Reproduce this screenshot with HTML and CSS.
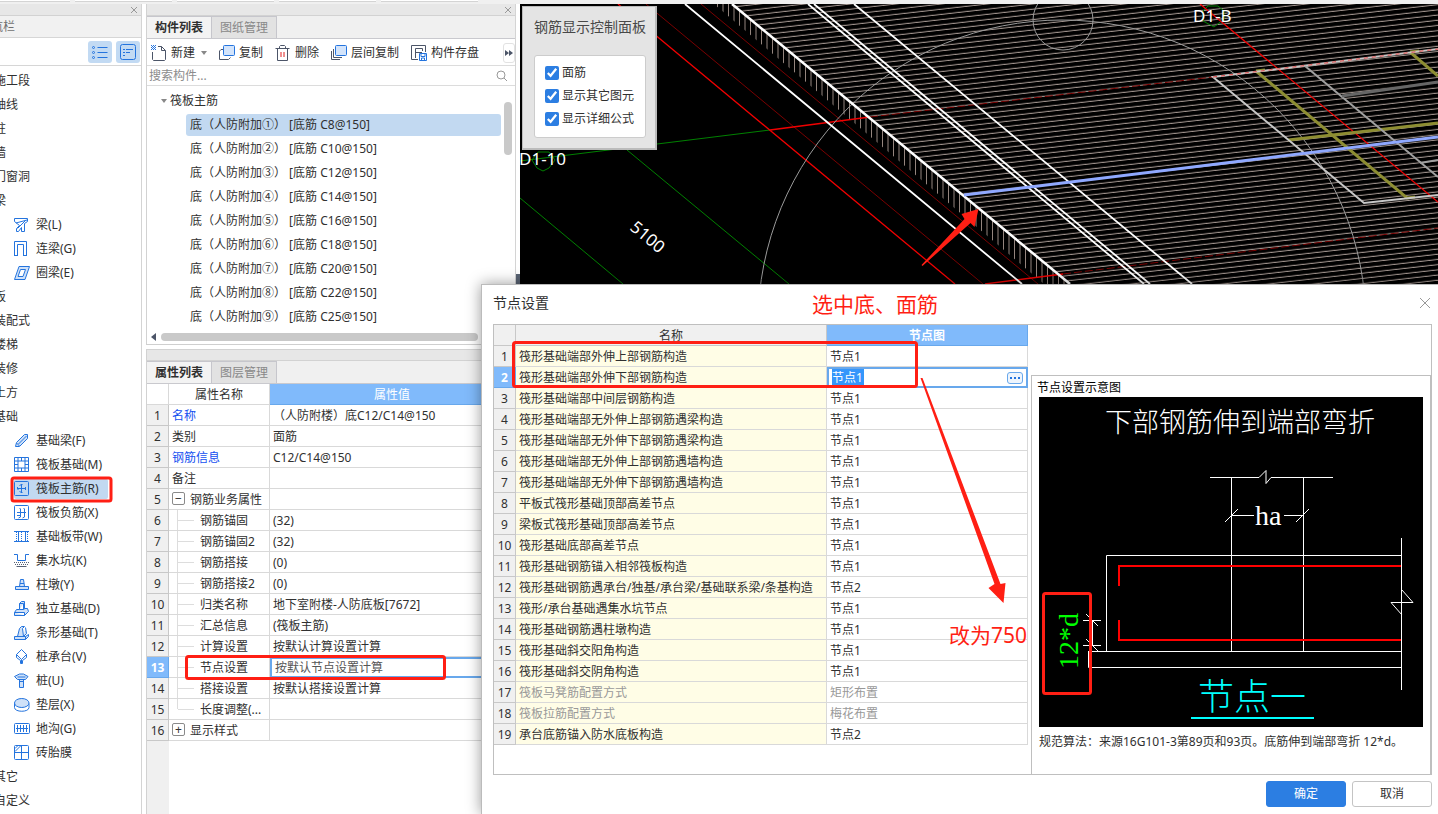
FILE: index.html
```html
<!DOCTYPE html>
<html lang="zh-CN">
<head>
<meta charset="utf-8">
<title>节点设置</title>
<link rel="stylesheet" href="styles.css">
</head>
<body>
<div class="ribbon"><span></span><span></span><span></span><span></span><span></span></div>
<div class="workspace">
  <nav class="nav">
    <div class="titlebar"><button class="close" aria-label="关闭"><svg width="8" height="8" viewBox="0 0 8 8"><path d="M1 1l6 6M7 1l-6 6"/></svg></button></div>
    <div class="nav-head"><span>导航栏</span></div>
    <div class="nav-tools">
      <button aria-label="列表"><svg width="16" height="16" viewBox="0 0 16 16"><path d="M5.500 3.500h10M5.500 8.500h10M5.500 13.500h10"/><circle cx="1.500" cy="3.500" r="1"/><circle cx="1.500" cy="8.500" r="1"/><circle cx="1.500" cy="13.500" r="1"/></svg></button>
      <button aria-label="详情"><svg width="16" height="16" viewBox="0 0 16 16"><rect x=".5" y=".5" width="15" height="15" rx="2"/><path d="M3 5.500h2M6 5.500h7M3 8.500h2M6 8.500h4M3 11.500h2"/></svg></button>
    </div>
    <ul class="cats">
      <li>施工段</li><li>轴线</li><li>柱</li><li>墙</li><li>门窗洞</li><li>梁</li>
      <li class="sub"><svg viewBox="0 0 16 16"><path d="M.5 1.500h13v3l-3 2v8h-3v-4l-3 4h-2v-3l3-3-5-4zM2 6L13 3M3.500 11.500l8-8"/></svg>梁(L)</li>
      <li class="sub"><svg viewBox="0 0 16 16"><path d="M.5 15V.5h12V15M3.500 15V3.500h6V15M0 14.500h3.500M9.500 14.500H13"/></svg>连梁(G)</li>
      <li class="sub"><svg viewBox="0 0 16 16"><path class="tint" fill-rule="evenodd" d="M5 1.500h10.500L11 14.500H.5zM6.500 4.500h5L9 11.500H4z"/></svg>圈梁(E)</li>
      <li>板</li><li>装配式</li><li>楼梯</li><li>装修</li><li>土方</li><li>基础</li>
      <li class="sub"><svg viewBox="0 0 16 16"><path class="tint" d="M1.500 13.500l1-4 8-8h3v4l-8 8zM2.500 10l3 3M4.500 11l8-8"/></svg>基础梁(F)</li>
      <li class="sub"><svg viewBox="0 0 16 16"><path d="M.5 .5h14v14H.5zM.5 4h14M.5 11h14M4 .5v14M11 .5v14M7.500 .5V4M7.500 11v4M.5 7.500H4M11 7.500h4"/></svg>筏板基础(M)</li>
      <li class="sub active"><svg viewBox="0 0 16 16"><rect x=".5" y=".5" width="14" height="14" rx="1"/><path d="M7.500 3v9M3.500 7.500h8M5.500 5L7.500 3l1 1M5.500 10l2 2 1-1M3.500 6v2l1 1M11.500 6v3"/></svg>筏板主筋(R)</li>
      <li class="sub"><svg viewBox="0 0 16 16"><rect x=".5" y=".5" width="14" height="14" rx="1"/><path d="M5.500 3l1 1v8l-2 1M9.500 3l1 1v8l-2 1M3 7.500h9M3 10.500h3"/></svg>筏板负筋(X)</li>
      <li class="sub"><svg viewBox="0 0 16 16"><path d="M0 2.500h15M0 12.500h15M4.500 2.500v10M11.500 2.500v10"/><path stroke-dasharray="1 1" d="M2.500 3v9M7.500 3v9M13.500 3v9"/></svg>基础板带(W)</li>
      <li class="sub"><svg viewBox="0 0 16 16"><path d="M0 1.500h3.500v6h8v-6H15"/><path class="slate" stroke-dasharray="1 1" d="M0 9.500h15M1 11.500h13"/><path class="slate" d="M2.500 13.500h10"/></svg>集水坑(K)</li>
      <li class="sub"><svg viewBox="0 0 16 16"><path class="tint" d="M5.500 9.500l1-7h3l1 7M1.500 12.500v-3h13v3zM6 6.500h4"/></svg>柱墩(Y)</li>
      <li class="sub"><svg viewBox="0 0 16 16"><path class="tint" d="M.5 14.500h10v-3H.5zM.5 11.500l2-3h3v-6l2-2h3v7h3l1 3-4 4M5.500 8.500h4v-6M9.500 2.500h-4M9.500 8.500l1.500-1"/></svg>独立基础(D)</li>
      <li class="sub"><svg viewBox="0 0 16 16"><path class="tint" d="M.5 14.500h11v-3H.5zM2.500 11.500h7l-1-8 2-2h-3l-2 2-2 8M9.500 11.500l3-3-1-6M11.500 11.500l3-2v2l-3 3"/></svg>条形基础(T)</li>
      <li class="sub"><svg viewBox="0 0 16 16"><path d="M7.500 .5l5 5-5 5-5-5zM2.500 5.500v3l4 3v3h2v-3l4-3v-3M7.500 10.500V15"/></svg>桩承台(V)</li>
      <li class="sub"><svg viewBox="0 0 16 16"><path class="tint" d="M.5 3.500l5-2.500h4l4.500 2.500-2.500 3h-8zM5.500 6.500v8h4v-8M3.500 4h8M5.500 8.500h4"/></svg>桩(U)</li>
      <li class="sub"><svg viewBox="0 0 16 16"><path d="M.5 6.500v4c0 5 14.500 5 14.500 0v-4"/><ellipse class="tint" cx="7.750" cy="6" rx="7.250" ry="4.500"/></svg>垫层(X)</li>
      <li class="sub"><svg viewBox="0 0 16 16"><rect x=".5" y="2.500" width="15" height="10" rx="1"/><path d="M2 7.500h12M3.500 4v7M6.500 4v7M9.500 4v7M12.500 4v7"/></svg>地沟(G)</li>
      <li class="sub"><svg viewBox="0 0 16 16"><rect x=".5" y=".5" width="14" height="14" rx="1"/><path d="M7.500 .5v14M.5 7.500h14M1 6.500l6-6M1 3.500l3-3"/></svg>砖胎膜</li>
      <li>其它</li><li>自定义</li>
    </ul>
  </nav>

  <div class="middle">
    <section class="panel">
      <div class="titlebar"><button class="close" aria-label="关闭"><svg width="8" height="8" viewBox="0 0 8 8"><path d="M1 1l6 6M7 1l-6 6"/></svg></button></div>
      <div class="tabs"><button class="tab on">构件列表</button><button class="tab">图纸管理</button></div>
      <div class="toolbar">
        <button><svg viewBox="0 0 16 16"><path d="M1.500 7v7.500l1 1h11l1-1V5.500l-4-4H7M10.500 1.500v4h4"/><path class="blue" stroke-dasharray="1 1" d="M0 .5h5M1 1.500h4M0 2.500h5M1 3.500h4M0 4.500h5"/></svg>新建<i class="caret"></i></button>
        <button><svg viewBox="0 0 16 16"><path d="M4.500 4.500H2L.5 6v8.500h9l2-2"/><rect class="sheet" x="4.500" y=".5" width="11" height="10" rx="1"/></svg>复制</button>
        <button><svg viewBox="0 0 16 16"><path d="M2.500 3.500v12h10v-12M.5 3.500h14M4.500 3.500v-2l1-1h4l1 1v2"/><path class="red" d="M6 7v5M9 7v5"/></svg>删除</button>
        <button><svg viewBox="0 0 16 16"><path d="M.5 6v8.500H9M2.500 4v8.500H11"/><rect class="sheet" x="4.500" y=".5" width="11" height="10" rx="1"/></svg>层间复制</button>
        <button><svg viewBox="0 0 16 16"><path d="M7 14.500H.5V.5h14V7M4.500 13V3.500h7V6M4.500 7.500H11"/><path class="blue" d="M8.500 8.500h7v7h-7zM10 8.500v3h4v-3M10.500 15v-2h3v2"/></svg>构件存盘</button>
        <button class="more" aria-label="更多"><svg width="8" height="6" viewBox="0 0 8 6"><path d="M0 0l4 3-4 3zM4 0l4 3-4 3z"/></svg></button>
      </div>
      <div class="search"><input type="search" placeholder="搜索构件..." aria-label="搜索构件"><svg width="12" height="12" viewBox="0 0 12 12"><circle cx="5" cy="5" r="4"/><path d="M8 8l3 3"/></svg></div>
      <div class="tree">
        <ul>
          <li class="root"><i class="caret"></i>筏板主筋</li>
          <li class="sel">底（人防附加①） [底筋 C8@150]</li>
          <li>底（人防附加②） [底筋 C10@150]</li>
          <li>底（人防附加③） [底筋 C12@150]</li>
          <li>底（人防附加④） [底筋 C14@150]</li>
          <li>底（人防附加⑤） [底筋 C16@150]</li>
          <li>底（人防附加⑥） [底筋 C18@150]</li>
          <li>底（人防附加⑦） [底筋 C20@150]</li>
          <li>底（人防附加⑧） [底筋 C22@150]</li>
          <li>底（人防附加⑨） [底筋 C25@150]</li>
        </ul>
        <div class="vbar"></div>
      </div>
      <div class="hbar"><i></i><span></span></div>
    </section>

    <section class="panel props">
      <div class="titlebar"></div>
      <div class="tabs"><button class="tab on">属性列表</button><button class="tab">图层管理</button></div>
      <table class="grid">
        <colgroup><col class="c-num"><col class="c-key"><col></colgroup>
        <thead><tr><td></td><th>属性名称</th><th class="hot">属性值</th></tr></thead>
        <tbody>
          <tr><th>1</th><td class="link">名称</td><td>（人防附楼）底C12/C14@150</td></tr>
          <tr><th>2</th><td>类别</td><td>面筋</td></tr>
          <tr><th>3</th><td class="link">钢筋信息</td><td>C12/C14@150</td></tr>
          <tr><th>4</th><td>备注</td><td></td></tr>
          <tr><th>5</th><td><button class="fold" aria-label="折叠">−</button>钢筋业务属性</td><td></td></tr>
          <tr><th>6</th><td class="leaf">钢筋锚固</td><td>(32)</td></tr>
          <tr><th>7</th><td class="leaf">钢筋锚固2</td><td>(32)</td></tr>
          <tr><th>8</th><td class="leaf">钢筋搭接</td><td>(0)</td></tr>
          <tr><th>9</th><td class="leaf">钢筋搭接2</td><td>(0)</td></tr>
          <tr><th>10</th><td class="leaf">归类名称</td><td>地下室附楼-人防底板[7672]</td></tr>
          <tr><th>11</th><td class="leaf">汇总信息</td><td>(筏板主筋)</td></tr>
          <tr><th>12</th><td class="leaf">计算设置</td><td>按默认计算设置计算</td></tr>
          <tr class="cur"><th>13</th><td class="leaf">节点设置</td><td>按默认节点设置计算</td></tr>
          <tr><th>14</th><td class="leaf">搭接设置</td><td>按默认搭接设置计算</td></tr>
          <tr><th>15</th><td class="leaf last">长度调整(...</td><td></td></tr>
          <tr><th>16</th><td><button class="fold" aria-label="展开">+</button>显示样式</td><td></td></tr>
        </tbody>
      </table>
    </section>
  </div>

  <main class="view">
    <svg class="scene" viewBox="520 4 918 280" preserveAspectRatio="xMinYMin slice">
      <defs>
        <pattern id="bars" width="60" height="5.200" patternUnits="userSpaceOnUse" patternTransform="skewY(-6.500)"><path d="M0 2h60" stroke="#a0938d" stroke-width="1.100"/></pattern>
        <pattern id="ticks" width="11" height="800" patternUnits="userSpaceOnUse"><path d="M2.500 0v800M8 0v800" stroke="#94857e" stroke-width="1"/></pattern>
      </defs>
      <path d="M520 4h918v280H520z"/>
      <path fill="url(#bars)" d="M732 4h706v280h-368z"/>
      <path fill="url(#ticks)" d="M714 4h18l338 280h-26z"/>
      <g fill="none">
        <g stroke="#008000"><path d="M520 161l250-31M627 150l162 134M520 198l103 86M532 160l6-8h11l6 8-6 8-6 3-6-3zM1203 11l5-5h10l6 5v8l-10 8-11-6z"/></g>
        <g stroke="#7a0000"><path d="M701 4l337 280M646 4l337 280"/><path stroke-dasharray="8 3" d="M870 117l343-40M1063 274l375-46"/></g>
        <g stroke="#f00000"><path stroke-width="1.300" d="M618 4l337 280M770 130l100-13M985 284l78-10M1200 4l238 198"/></g>
        <g stroke="#9a9a9a"><circle cx="1062" cy="324" r="304"/><circle cx="1063" cy="20" r="30"/></g>
        <g stroke="#fff" stroke-width="1.800"><path d="M685 4l337 280M808 4l336 280M814 4l336 280M854 4l338 280"/><path stroke-width="2.500" d="M732 4l338 280"/></g>
        <g stroke="#8d8d32" stroke-width="3"><path d="M1256 71l151 127 8-1M1288 140l150-17M1410 52l28 24M1256 71l9-1M1410 52l9-1"/></g>
        <g stroke="#c8c8c8" stroke-width="2"><path d="M1438 49l-225 28 151 126 74-8"/><path stroke="#a0a0a0" d="M1305 66l133 111M1420 163l18-3"/><path stroke="#666" stroke-width="3" d="M1342 96l96-14"/></g>
        <path stroke="#e04040" stroke-dasharray="4 4" d="M1213 77l225-28"/>
        <path stroke="#8fa8ff" stroke-width="3" d="M964 195l474-58"/>
      </g>
      <g class="cad"><text x="519" y="165">D1-10</text><text x="1193" y="22">D1-B</text><text transform="translate(629 229) rotate(40)">5100</text></g>
    </svg>
    <aside class="ctl">
      <h2>钢筋显示控制面板</h2>
      <div class="ctl-box">
        <label><input type="checkbox" checked>面筋</label>
        <label><input type="checkbox" checked>显示其它图元</label>
        <label><input type="checkbox" checked>显示详细公式</label>
      </div>
    </aside>
  </main>
</div>

<div class="dialog" role="dialog" aria-label="节点设置">
  <header><h1>节点设置</h1><button class="close" aria-label="关闭"><svg width="12" height="12" viewBox="0 0 12 12"><path d="M1 1l10 10M11 1L1 11"/></svg></button></header>
  <div class="dialog-body">
    <table class="grid nodes">
      <colgroup><col class="c-num"><col><col class="c-node"></colgroup>
      <thead><tr><th></th><th>名称</th><th class="hot strong">节点图</th></tr></thead>
      <tbody>
        <tr><th>1</th><td>筏形基础端部外伸上部钢筋构造</td><td>节点1</td></tr>
        <tr class="cur"><th>2</th><td>筏形基础端部外伸下部钢筋构造</td><td><div class="edit"><input value="节点1" aria-label="节点图"><button aria-label="选择节点"><svg width="10" height="2" viewBox="0 0 10 2"><path d="M0 0h2v2H0zM4 0h2v2H4zM8 0h2v2H8z"/></svg></button></div></td></tr>
        <tr><th>3</th><td>筏形基础端部中间层钢筋构造</td><td>节点1</td></tr>
        <tr><th>4</th><td>筏形基础端部无外伸上部钢筋遇梁构造</td><td>节点1</td></tr>
        <tr><th>5</th><td>筏形基础端部无外伸下部钢筋遇梁构造</td><td>节点1</td></tr>
        <tr><th>6</th><td>筏形基础端部无外伸上部钢筋遇墙构造</td><td>节点1</td></tr>
        <tr><th>7</th><td>筏形基础端部无外伸下部钢筋遇墙构造</td><td>节点1</td></tr>
        <tr><th>8</th><td>平板式筏形基础顶部高差节点</td><td>节点1</td></tr>
        <tr><th>9</th><td>梁板式筏形基础顶部高差节点</td><td>节点1</td></tr>
        <tr><th>10</th><td>筏形基础底部高差节点</td><td>节点1</td></tr>
        <tr><th>11</th><td>筏形基础钢筋锚入相邻筏板构造</td><td>节点1</td></tr>
        <tr><th>12</th><td>筏形基础钢筋遇承台/独基/承台梁/基础联系梁/条基构造</td><td>节点2</td></tr>
        <tr><th>13</th><td>筏形/承台基础遇集水坑节点</td><td>节点1</td></tr>
        <tr><th>14</th><td>筏形基础钢筋遇柱墩构造</td><td>节点1</td></tr>
        <tr><th>15</th><td>筏形基础斜交阳角构造</td><td>节点1</td></tr>
        <tr><th>16</th><td>筏形基础斜交阴角构造</td><td>节点1</td></tr>
        <tr class="off"><th>17</th><td>筏板马凳筋配置方式</td><td>矩形布置</td></tr>
        <tr class="off"><th>18</th><td>筏板拉筋配置方式</td><td>梅花布置</td></tr>
        <tr><th>19</th><td>承台底筋锚入防水底板构造</td><td>节点2</td></tr>
      </tbody>
    </table>
    <figure class="preview">
      <figcaption>节点设置示意图</figcaption>
      <svg viewBox="0 0 384 330">
        <path d="M0 0h384v330H0z"/>
        <g fill="none" stroke="#fff">
          <path d="M171 80.500h49l7-7v13l5-6h62M192.500 80v174M264.500 80v174M192 118.500h23M245 118.500h19M186 125l13-13M257 125l13-13"/>
          <path d="M362 158.500H67.500v96M49 254.500h313M49.500 254v16.500H362M362.500 141v152M363 193l11 12.500h-22l11 12.500"/>
          <path d="M53.500 223v25M44 223.500h18M44 248.500h18M47 217l12 12M47 242l12 12"/>
        </g>
        <path fill="none" stroke="#f00" stroke-width="2" d="M362 169H80v20M80 223v20h282"/>
        <g class="draft">
          <text x="66" y="35" font-size="27">下部钢筋伸到端部弯折</text>
          <text x="216" y="128" font-size="28">ha</text>
          <text class="green" font-size="28" transform="translate(39 272) rotate(-90)">12*d</text>
          <text class="cyan" x="159" y="313" font-size="36">节点一</text>
        </g>
        <path stroke="#0ff" stroke-width="2" d="M152 321h123"/>
      </svg>
      <p>规范算法：来源16G101-3第89页和93页。底筋伸到端部弯折 12*d。</p>
    </figure>
  </div>
  <footer><button class="btn primary">确定</button><button class="btn">取消</button></footer>
</div>

<svg class="marks" width="1438" height="814" viewBox="0 0 1438 814">
  <g class="frames"><rect x="12" y="478" width="99" height="23" rx="2"/><rect x="186.500" y="656.500" width="258" height="22" rx="2"/><rect x="513.500" y="342.500" width="403" height="44" rx="2"/><rect x="1043.500" y="593.500" width="47" height="100" rx="2"/></g>
  <path d="M921.500 265l43-46-3-5 17-5-4 18-4-4-48 43zM920.500 378l74 206-6 4 15 15 2-20-5 1-78-206z"/>
  <text x="812" y="312">选中底、面筋</text><text x="949" y="643">改为750</text>
</svg>
</body>
</html>
```
FILE: styles.css
```css
* { box-sizing: border-box; }
body { margin: 0; height: 100vh; overflow: hidden; position: relative; display: flex; flex-direction: column; background: #fff; color: #303030; font: 12px/20px "Noto Sans", "Noto Sans CJK SC", sans-serif; }
button, input { font: inherit; color: inherit; }
button { padding: 0; border: 0; background: none; }
ul { margin: 0; padding: 0; list-style: none; }
svg { display: block; flex: none; }

.ribbon { height: 4px; flex: none; display: flex; gap: 5px; background: #f0f0f0; }
.ribbon span { width: 97px; height: 2px; background: #fff; border-bottom: 1px solid #d4d4d4; }
.ribbon span:first-child { width: 70px; }

.workspace { flex: 1; min-height: 0; display: flex; gap: 4px; }
.titlebar { height: 12px; display: flex; justify-content: flex-end; align-items: center; padding-right: 3px; background: #e7e7e7; border-bottom: 1px solid #d2d2d2; }
.close svg { fill: none; stroke: #999; }

.nav { width: 142px; flex: none; overflow: hidden; border-right: 1px solid #d4d4d4; white-space: nowrap; }
.nav-head { height: 22px; padding-top: 1px; background: #f1f1f1; border-bottom: 1px solid #d6d6d6; color: #707070; }
.nav-head span { margin-left: -21px; }
.nav-tools { height: 28px; display: flex; justify-content: flex-end; align-items: center; gap: 4px; padding-right: 1px; border-bottom: 1px solid #d6d6d6; }
.nav-tools button { width: 24px; height: 22px; display: grid; place-items: center; border-radius: 3px; background: #c2daf3; }
.nav-tools svg, .cats svg { fill: none; stroke: #2474de; }
.cats { display: flex; flex-direction: column; padding-top: 3px; }
.cats li { height: 24px; line-height: 24px; margin-left: -6px; }
.cats li.sub { display: flex; align-items: center; gap: 6px; height: 20px; line-height: 20px; margin: 2px 33px 2px 14px; border-radius: 2px; }
.cats li.active { background: #c2d9f1; }
.cats svg { width: 16px; height: 16px; }
.cats .tint { fill: #cfe1f8; }
.cats .slate { stroke: #566073; }

.middle { width: 370px; flex: none; display: flex; flex-direction: column; gap: 4px; border-right: 1px solid #d4d4d4; white-space: nowrap; }
.panel { border-left: 1px solid #d2d2d2; border-bottom: 1px solid #cfcfcf; }
.tabs { height: 23px; display: flex; background: #f0f0f0; border-bottom: 1px solid #c9c9ce; }
.tab { width: 65px; background: #e2e2e2; border: 1px solid #c6c6cc; border-width: 1px 1px 0 0; color: #888; }
.tab.on { background: #f3f3f3; font-weight: bold; color: #303030; }
.toolbar { height: 27px; display: flex; align-items: center; gap: 12px; padding: 2px 0 0 4px; border-bottom: 1px solid #dcdcdc; }
.toolbar button { display: flex; align-items: center; gap: 4px; }
.toolbar svg { width: 16px; height: 16px; fill: none; stroke: #4c5568; }
.toolbar .blue { stroke: #2474de; }
.toolbar .red { stroke: #e02020; }
.toolbar .sheet { fill: #d3e4fb; stroke: #2474de; }
.caret { width: 0; height: 0; border: 3px solid transparent; border-top: 4px solid #888; border-bottom: 0; }
.toolbar .caret { margin-left: 2px; }
.toolbar .more { margin-left: auto; width: 12px; height: 20px; justify-content: center; border: 1px solid #e2e2e2; border-radius: 3px; }
.toolbar .more svg { width: 8px; height: 6px; fill: #4c5568; stroke: none; }
.search { height: 20px; display: flex; align-items: center; padding: 1px 7px 0 2px; border-bottom: 1px solid #dcdcdc; }
.search input { flex: 1; min-width: 0; height: 18px; padding: 0; border: 0; outline: 0; background: none; }
.search input::placeholder { color: #8c8c8c; }
.search svg { fill: none; stroke: #999; }
.tree { display: flex; padding: 3px 3px 0 0; }
.tree ul { flex: 1; display: flex; flex-direction: column; }
.tree li { height: 22px; line-height: 22px; margin: 1px 3px 1px 39px; padding-left: 4px; }
.tree li.root { display: flex; align-items: center; gap: 3px; height: 24px; margin: 0; padding-left: 14px; }
.tree li.sel { background: #c2d9f1; border-radius: 3px; }
.tree .vbar { width: 8px; height: 53px; margin-top: 13px; border-radius: 4px; background: #c9c9c9; }
.hbar { height: 15px; display: flex; align-items: center; gap: 5px; padding-left: 4px; }
.hbar i { border: 4px solid transparent; border-right: 5px solid #4c5568; border-left: 0; }
.hbar span { width: 317px; height: 8px; border-radius: 4px; background: #c9c9c9; }

.props { flex: 1; background: linear-gradient(to right, #f0f0f0 22px, #fff 22px); border-bottom: 0; border-top: 1px solid #d2d2d2; }
.props .titlebar { height: 11px; }
.grid { width: 100%; table-layout: fixed; border-collapse: separate; border-spacing: 0; white-space: nowrap; line-height: 17px; background: #fff; }
.grid col.c-num { width: 22px; }
.grid col.c-key { width: 101px; }
.grid col.c-node { width: 201px; }
.grid th, .grid td { height: 21px; padding: 0 3px; border: solid #d9d9d9; border-width: 0 1px 1px 0; text-align: left; font-weight: normal; overflow: hidden; }
.grid tbody th { padding: 0; text-align: center; background: #f0f0f0; border-color: #c8c8c8; }
.grid thead th { text-align: center; }
.grid thead th.hot { background: #80bafb; border-color: #68a8ec; color: #fff; }
.grid thead th.strong { font-weight: bold; }
.grid tbody tr.cur th { background: #80bafb; border-color: #68a8ec; color: #fff; font-weight: bold; }
.grid td.link { color: #1450f0; }
.props tr.cur td:last-child { border: 2px solid #68a8ec; border-right: 0; color: #555; }
.fold { width: 13px; height: 13px; margin-right: 5px; border: 1px solid #8a8a8a; border-radius: 2px; line-height: 10px; vertical-align: 1px; text-align: center; }
.grid td.leaf { padding-left: 31px; background: linear-gradient(#ddd, #ddd) 9px 10px / 16px 1px no-repeat, linear-gradient(#ddd, #ddd) 8px 0 / 1px 100% no-repeat; }
.grid td.leaf.last { background-size: 16px 1px, 1px 10px; }

.view { flex: 1; min-width: 0; position: relative; }
.scene { width: 100%; height: 280px; }
.view::before { content: ""; position: absolute; left: -4px; top: 270px; width: 4px; height: 10px; background: #596373; }
.cad { fill: #fff; font: 17px "Noto Sans", sans-serif; }
.ctl { position: absolute; left: 2px; top: 2px; width: 135px; height: 144px; padding: 10px 12px; background: #e4e4e4; border: 1px solid #bbb; border-width: 1px 2px 2px 1px; white-space: nowrap; }
.ctl h2 { margin: 0 0 18px -1px; font-size: 14px; line-height: 20px; font-weight: normal; color: #484848; }
.ctl-box { display: flex; flex-direction: column; gap: 3px; margin: 0 -3px 0 -1px; padding: 7px 10px 8px; background: #fff; border: 1px solid #ccc; border-radius: 3px; }
.ctl label { display: flex; align-items: center; gap: 3px; }
.ctl input { width: 14px; height: 14px; margin: 0; accent-color: #2c7ee2; }

.dialog { position: absolute; left: 481px; top: 284px; right: 0; bottom: 0; display: flex; flex-direction: column; background: #fff; border: 1px solid #bbb; border-width: 1px 0 0 1px; box-shadow: 0 0 14px rgba(0, 0, 0, .4); }
.dialog header { height: 39px; flex: none; display: flex; justify-content: space-between; align-items: center; padding: 0 7px 3px 11px; }
.dialog h1 { margin: 0; font-size: 14px; line-height: 20px; font-weight: normal; }
.dialog-body { flex: 1; min-height: 0; display: flex; align-items: flex-start; gap: 3px; margin: 0 6px 0 11px; border: 1px solid #bfbfbf; }
.nodes { width: 534px; flex: none; }
.nodes thead th { background: #f0f0f0; border-color: #c8c8c8; }
.nodes tbody td:nth-child(2) { background: #fffde6; }
.nodes tr.off td { color: #999; }
.nodes tr.cur td:last-child { padding: 0 3px; border: 2px solid #68a8ec; }
.edit { height: 17px; display: flex; justify-content: space-between; align-items: center; }
.edit input { width: 32px; height: 17px; padding: 0; border: 0; background: #3596fb; color: #fff; }
.edit button { width: 16px; height: 12px; display: grid; place-items: center; border: 1px solid #68a8ec; border-radius: 3px; background: #eef5fd; }
.edit svg { fill: #2474de; }
.preview { flex: 1; align-self: stretch; min-width: 0; margin: 50px 0 0; padding: 3px 7px 0; border: 1px solid #bfbfbf; border-width: 1px 1px 0 1px; }
.preview figcaption { line-height: 18px; margin-left: -2px; color: #000; }
.preview svg { width: 100%; max-width: 384px; }
.preview p { margin: 5px 0 0; white-space: nowrap; }
.draft { fill: #fff; font-family: "Liberation Serif", "Noto Sans CJK SC", serif; font-weight: 300; }
.draft .green { fill: #0f0; }
.draft .cyan { fill: #0ff; }
.dialog footer { flex: none; display: flex; justify-content: flex-end; gap: 6px; padding: 6px 6px 7px; }
.btn { width: 80px; height: 26px; border: 1px solid #c4c4c4; border-radius: 3px; background: #fff; }
.btn.primary { background: #2c7ee2; border-color: #2c7ee2; color: #fff; }

.marks { position: absolute; left: 0; top: 0; pointer-events: none; fill: #ff1f14; font-size: 21px; }
.frames { fill: none; stroke: #ff1f14; stroke-width: 3; }
```
